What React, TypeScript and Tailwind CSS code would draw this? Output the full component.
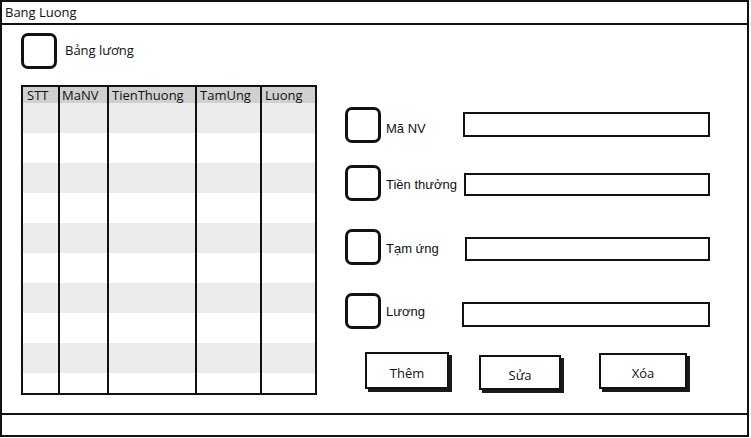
import React from "react";

const bal = { fontFamily: '"Open Sans", "Noto Sans", sans-serif' };
const sans = { fontFamily: '"Liberation Sans", Arial, sans-serif' };

function Box({ className = "" }: { className?: string }) {
  return <div className={"shrink-0 w-[36px] h-[36px] rounded-[7px] border-[3px] border-[#111] bg-white " + className} />;
}

const cols = [
  { name: "STT", w: "w-[37px]", pl: "pl-[4px]" },
  { name: "MaNV", w: "w-[49px]", pl: "pl-[2px]" },
  { name: "TienThuong", w: "w-[88px]", pl: "pl-[3px]" },
  { name: "TamUng", w: "w-[65px]", pl: "pl-[3px]" },
  { name: "Luong", w: "flex-1", pl: "pl-[3px]" },
];

function Row({ bg, h, header }: { bg: string; h: string; header?: boolean }) {
  return (
    <div className={"flex shrink-0 " + bg + " " + h}>
      {cols.map((c, i) => (
        <div
          key={c.name}
          className={
            c.w +
            " " +
            c.pl +
            " " +
            (i < cols.length - 1 ? "border-r-2 border-[#111] " : "") +
            "text-[13px] leading-[16px] text-[#111] whitespace-nowrap overflow-hidden"
          }
          style={bal}
        >
          {header ? c.name : ""}
        </div>
      ))}
    </div>
  );
}

function Field({ label, mt, inputCls, labelMt }: { label: string; mt: string; inputCls: string; labelMt: string }) {
  return (
    <div className={"flex items-start " + mt}>
      <Box />
      <div className={"ml-[5px] w-[77px] text-[13px] text-[#111] whitespace-nowrap " + labelMt} style={sans}>
        {label}
      </div>
      <div className={"border-2 border-[#111] bg-white " + inputCls} />
    </div>
  );
}

function Btn({ label, cls, textCls }: { label: string; cls: string; textCls: string }) {
  return (
    <div className={"border-2 border-[#111] bg-white shadow-[3px_3px_0_#1a1a1a] flex justify-center text-[13px] text-[#111] " + cls} style={bal}>
      <span className={textCls}>{label}</span>
    </div>
  );
}

export default function App() {
  return (
    <div className="w-[751px] h-[438px] bg-white">
      <div className="w-[749px] h-[437px] border-2 border-[#111] flex flex-col">
        <div className="h-[23px] shrink-0 border-b-2 border-[#111] pl-[3px] text-[13px] leading-[20px] text-[#111]" style={bal}>
          Bang Luong
        </div>
        <div className="flex-1 flex">
          <div className="pl-[19px] pt-[8px] flex flex-col">
            <div className="flex items-center">
              <Box />
              <span className="ml-[8px] text-[13px] text-[#111]" style={bal}>Bảng lương</span>
            </div>
            <div className="mt-[16px] w-[296px] h-[310px] border-2 border-[#111] flex flex-col overflow-hidden">
              <Row bg="bg-[#d0d0d0]" h="h-[16px]" header />
              <Row bg="bg-[#ececec]" h="h-[30px]" />
              <Row bg="bg-white" h="h-[30px]" />
              <Row bg="bg-[#ececec]" h="h-[30px]" />
              <Row bg="bg-white" h="h-[30px]" />
              <Row bg="bg-[#ececec]" h="h-[30px]" />
              <Row bg="bg-white" h="h-[30px]" />
              <Row bg="bg-[#ececec]" h="h-[30px]" />
              <Row bg="bg-white" h="h-[30px]" />
              <Row bg="bg-[#ececec]" h="h-[30px]" />
              <Row bg="bg-white" h="h-[30px]" />
            </div>
          </div>
          <div className="ml-[28px] pt-[82px] flex flex-col">
            <Field label="Mã NV" mt="" labelMt="mt-[12px]" inputCls="mt-[5px] w-[247px] h-[25px]" />
            <Field label="Tiền thưởng" mt="mt-[22px]" labelMt="mt-[10px]" inputCls="mt-[8px] ml-[1px] w-[246px] h-[23px]" />
            <Field label="Tạm ứng" mt="mt-[28px]" labelMt="mt-[10px]" inputCls="mt-[8px] ml-[2px] w-[245px] h-[24px]" />
            <Field label="Lương" mt="mt-[28px]" labelMt="mt-[9px]" inputCls="mt-[9px] ml-[-1px] w-[248px] h-[25px]" />
            <div className="flex items-start mt-[23px] pl-[20px]">
              <Btn label="Thêm" cls="w-[84px] h-[37px]" textCls="mt-[10px]" />
              <Btn label="Sửa" cls="ml-[30px] mt-[3px] w-[82px] h-[35px]" textCls="mt-[9px]" />
              <Btn label="Xóa" cls="ml-[38px] mt-[1px] w-[88px] h-[36px]" textCls="mt-[9px]" />
            </div>
          </div>
        </div>
        <div className="h-[22px] shrink-0 border-t-2 border-[#111]" />
      </div>
    </div>
  );
}
